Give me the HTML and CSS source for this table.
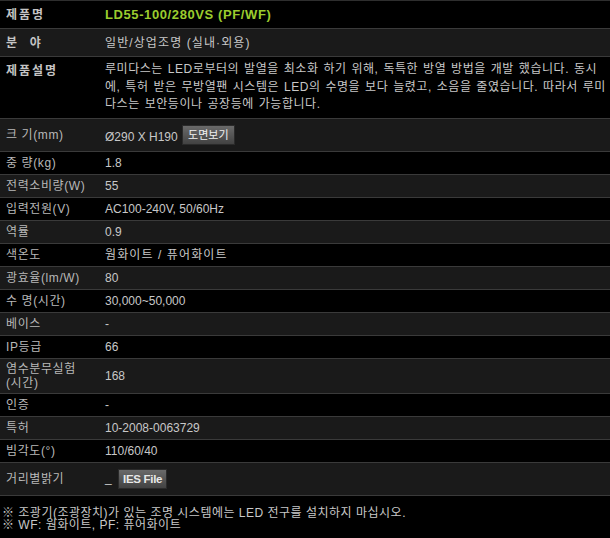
FILE: index.html
```html
<!DOCTYPE html>
<html lang="ko">
<head>
    <meta charset="UTF-8">
    <title>LD55-100/280VS 제품사양</title>
    <link rel="stylesheet" href="styles.css">
</head>
<body>
    <table class="spec">
        <tr class="row-title">
            <th class="strong">제품명</th>
            <td class="model">LD55-100/280VS (PF/WF)</td>
        </tr>
        <tr class="alt row-title">
            <th class="strong">분 &nbsp;야</th>
            <td class="kr">일반/상업조명 (실내·외용)</td>
        </tr>
        <tr class="row-desc">
            <th class="strong">제품설명</th>
            <td class="desc">루미다스는 LED로부터의 발열을 최소화 하기 위해, 독특한 방열 방법을 개발 했습니다. 동시에, 특허 받은 무방열팬 시스템은 LED의 수명을 보다 늘렸고, 소음을 줄였습니다. 따라서 루미다스는 보안등이나 공장등에 가능합니다.</td>
        </tr>
        <tr class="alt row-btn">
            <th>크 기(mm)</th>
            <td class="size">Ø290 X H190 <span class="btn btn-kr">도면보기</span></td>
        </tr>
        <tr>
            <th>중 량(kg)</th>
            <td>1.8</td>
        </tr>
        <tr class="alt">
            <th>전력소비량(W)</th>
            <td>55</td>
        </tr>
        <tr>
            <th>입력전원(V)</th>
            <td>AC100-240V, 50/60Hz</td>
        </tr>
        <tr class="alt">
            <th>역률</th>
            <td>0.9</td>
        </tr>
        <tr>
            <th>색온도</th>
            <td class="kr">웜화이트 / 퓨어화이트</td>
        </tr>
        <tr class="alt">
            <th>광효율(lm/W)</th>
            <td>80</td>
        </tr>
        <tr>
            <th>수 명(시간)</th>
            <td>30,000~50,000</td>
        </tr>
        <tr class="alt">
            <th>베이스</th>
            <td>-</td>
        </tr>
        <tr>
            <th>IP등급</th>
            <td>66</td>
        </tr>
        <tr class="alt row-two">
            <th>염수분무실험<br>(시간)</th>
            <td>168</td>
        </tr>
        <tr>
            <th>인증</th>
            <td>-</td>
        </tr>
        <tr class="alt">
            <th>특허</th>
            <td>10-2008-0063729</td>
        </tr>
        <tr>
            <th>빔각도(°)</th>
            <td>110/60/40</td>
        </tr>
        <tr class="alt row-btn">
            <th>거리별밝기</th>
            <td>_ <span class="btn btn-ies">IES File</span></td>
        </tr>
    </table>

    <div class="notes">
        <p>※ 조광기(조광장치)가 있는 조명 시스템에는 LED 전구를 설치하지 마십시오.</p>
        <p>※ WF: 웜화이트, PF: 퓨어화이트</p>
    </div>
</body>
</html>
```

FILE: styles.css
```css
* {
    margin: 0;
    padding: 0;
    box-sizing: border-box;
}

body {
    background: #000;
    color: #c8c8c8;
    font-family: 'Liberation Sans', 'Noto Sans CJK KR', sans-serif;
    font-size: 12px;
    width: 610px;
    height: 538px;
    overflow: hidden;
}

.spec {
    width: 100%;
    border-collapse: collapse;
    border-top: 1px solid #2e2e2e;
}

.spec tr {
    background: #000;
}

.spec tr.alt {
    background: #1a1a1a;
}

.spec th,
.spec td {
    border-bottom: 1px solid #3a3a3a;
    text-align: left;
    vertical-align: middle;
    line-height: 16px;
    padding: 3px 6px;
    height: 23px;
}

.spec th {
    width: 105px;
    font-weight: normal;
    color: #b8b8b8;
    white-space: nowrap;
    letter-spacing: 0.6px;
}

.spec td {
    padding-left: 0;
    color: #c8c8c8;
}

.spec td.kr {
    letter-spacing: 1.1px;
}

.spec td.desc {
    letter-spacing: 0.55px;
    word-spacing: 1px;
}

.spec th.strong {
    font-weight: bold;
    color: #c4c4c4;
    letter-spacing: 2px;
}

.row-title th,
.row-title td {
    height: 28px;
}

.model {
    color: #9bcc2e !important;
    font-weight: bold;
    font-size: 13px;
    letter-spacing: 0.6px;
}

.row-desc th,
.row-desc td {
    height: 61px;
    line-height: 17.5px;
    padding-top: 4px;
    padding-bottom: 4px;
}

.row-desc th {
    vertical-align: top;
    padding-top: 6px;
}

.row-desc td {
    padding-right: 2px;
}

.row-btn th,
.row-btn td {
    height: 33px;
}

.size {
    padding-top: 8px !important;
}

.row-two th,
.row-two td {
    height: 35px;
}

.row-two th {
    line-height: 14px;
}

.btn {
    display: inline-block;
    vertical-align: middle;
    background: linear-gradient(#6a6a6a, #424242);
    border: 1px solid #2a2a2a;
    color: #f0f0f0;
    height: 20px;
    line-height: 18px;
    padding: 0 5px;
}

.btn-kr {
    font-size: 11px;
    margin-left: 1px;
    margin-top: -6px;
}

.btn-ies {
    font-size: 11.5px;
    font-weight: bold;
    color: #e8e8e8;
    padding: 0 4px;
    margin-left: 3px;
    letter-spacing: -0.3px;
}

.notes {
    padding: 11px 2px 0;
    color: #c8c8c8;
    line-height: 12px;
    letter-spacing: 0.5px;
}
```
